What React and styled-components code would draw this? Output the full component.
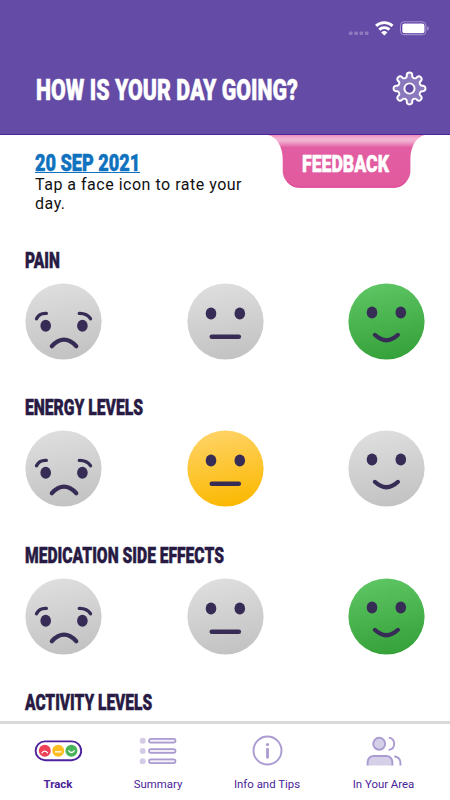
import React from "react";
import styled, { createGlobalStyle } from "styled-components";

const Global = createGlobalStyle`
  * { box-sizing: border-box; }
  body { margin: 0; background: #fff; font-family: Roboto, "Liberation Sans", sans-serif; }
`;

const Screen = styled.div`
  width: 450px;
  height: 800px;
  display: flex;
  flex-direction: column;
  overflow: hidden;
  background: #fff;
`;

const Header = styled.header`
  flex: none;
  height: 135px;
  background: #644ba5;
  border-bottom: 1px solid #4d2399;
`;

const StatusBar = styled.div`
  height: 48px;
  padding: 20px 20px 0 0;
  display: flex;
  justify-content: flex-end;
`;

const TitleRow = styled.div`
  height: 82px;
  display: flex;
  align-items: center;
  justify-content: space-between;
  padding: 0 22px 1px 35.5px;

  & > svg { flex: none; }
`;

const Condensed = styled.span`
  display: block;
  width: max-content;
  margin: 0;
  font-family: Roboto, sans-serif;
  font-weight: 900;
  font-size: ${(p) => p.$size}px;
  line-height: ${(p) => p.$size}px;
  color: ${(p) => p.$color || "#271a43"};
  -webkit-text-stroke: 0.5px ${(p) => p.$color || "#271a43"};
  white-space: nowrap;
  transform: scaleX(${(p) => p.$scale});
  transform-origin: 0 50%;
`;

const Title = styled(Condensed)`
  flex: none;
  margin: 5px -120px 0 0;
`;

const Intro = styled.section`
  flex: none;
  height: 111px;
  display: flex;
  padding-left: 35px;
`;

const IntroText = styled.div`
  width: 233px;
  padding-top: 15.5px;
`;

const DateLink = styled.a`
  display: block;
  width: 105px;
  height: 22.5px;
  border-bottom: 1.5px solid #0f72be;
`;

const Hint = styled.p`
  margin: 1.5px 0 0;
  width: 215px;
  font-size: 16px;
  line-height: 19.4px;
  letter-spacing: 0.51px;
  color: #111;
`;

const Feedback = styled.button`
  display: grid;
  width: 157px;
  height: 53px;
  padding: 0;
  border: 0;
  background: none;
  & > * { grid-area: 1 / 1; }
  & > span { justify-self: start; margin: 17px 0 0 34px; align-self: start; }
`;

const Questions = styled.main`
  flex: 1;
  min-height: 0;
  overflow: hidden;
`;

const Question = styled.section`
  height: 147.4px;
  padding: 4px 25px 0;
`;

const Heading = styled.h2`
  margin: 0;
  height: 33px;
`;

const Faces = styled.div`
  display: flex;
  justify-content: space-between;
`;

const FaceButton = styled.button`
  display: block;
  width: 77px;
  height: 77px;
  padding: 0;
  border: 0;
  background: none;
`;

const Nav = styled.nav`
  flex: none;
  height: 79px;
  border-top: 3px solid #d9d9d9;
  padding-left: 8px;
  display: grid;
  grid-template-columns: 100px 100px 118px 115px;
`;

const NavItem = styled.a`
  display: flex;
  flex-direction: column;
  align-items: center;
  font-size: 11.4px;
  line-height: 14px;
  font-weight: ${(p) => (p.$active ? 700 : 400)};
  color: #4a2498;
`;

const NavIcon = styled.div`
  height: 53px;
  display: flex;
  align-items: center;
`;

const FILLS = {
  grey: ["#dedede", "#c2c2c2"],
  amber: ["#ffd365", "#fbb800"],
  green: ["#5dc563", "#35a139"],
};

function Face({ mood, tone, id }) {
  const [top, bottom] = FILLS[tone];
  const line = { fill: "none", stroke: "#372c55", strokeLinecap: "round" };
  return (
    <FaceButton>
      <svg width="77" height="77" viewBox="0 0 77 77">
        <defs>
          <linearGradient id={id} x1="0.4" y1="0" x2="0.6" y2="1">
            <stop offset="0" stopColor={top} />
            <stop offset="1" stopColor={bottom} />
          </linearGradient>
        </defs>
        <circle cx="38.5" cy="38.5" r="38.1" fill={`url(#${id})`} />
        {mood === "sad" && (
          <g {...line}>
            <path d="M11.5 35.7Q14.5 29.9 21.3 30.4M54.3 30.4Q62 30.2 65.5 35.7" strokeWidth="3.4" />
            <path d="M26.8 63.2Q39 50.2 51.3 63.2" strokeWidth="4.2" />
            <ellipse cx="20.7" cy="42.8" rx="5.3" ry="6" fill="#372c55" stroke="none" />
            <ellipse cx="57.4" cy="42.8" rx="5.3" ry="6" fill="#372c55" stroke="none" />
          </g>
        )}
        {mood !== "sad" && (
          <g fill="#372c55">
            <ellipse cx="24" cy={mood === "ok" ? 30.4 : 29.4} rx="5.3" ry="6" />
            <ellipse cx="52.8" cy={mood === "ok" ? 30.4 : 29.4} rx="5.3" ry="6" />
          </g>
        )}
        {mood === "ok" && <path d="M24.8 53.7H51.8" {...line} strokeWidth="4.6" />}
        {mood === "happy" && <path d="M26.8 51.8Q38.4 62.7 50 51.8" {...line} strokeWidth="4.1" />}
      </svg>
    </FaceButton>
  );
}

function gearPath() {
  const point = (angle, side) => {
    const a = (angle * Math.PI) / 180;
    const x = 18 + 13.5 * Math.cos(a) - side * 2.8 * Math.sin(a);
    const y = 18 + 13.5 * Math.sin(a) + side * 2.8 * Math.cos(a);
    return `${x.toFixed(2)} ${y.toFixed(2)}`;
  };
  let d = `M${point(0, -1)}`;
  for (let i = 0; i < 8; i += 1) {
    d += `A2.82 2.82 0 0 1 ${point(i * 45, 1)}`;
    d += `A2.6 2.6 0 0 0 ${point((i + 1) * 45, -1)}`;
  }
  return `${d}Z`;
}

const Gear = () => (
  <svg width="37" height="37" viewBox="-0.5 -0.5 37 37" stroke="#fff" strokeWidth="1.9">
    <path d={gearPath()} fill="#8b78bd" />
    <circle cx="18" cy="18" r="5.1" fill="#644ba5" />
  </svg>
);

const StatusIcons = () => (
  <svg width="82" height="18" viewBox="348 20 82 18">
    <g fill="#fff" fillOpacity=".27">
      {[349, 354.3, 359.6, 364.9].map((x) => (
        <rect key={x} x={x} y="31.5" width="3.6" height="3.5" rx="1" />
      ))}
    </g>
    <g fill="none" stroke="#fff" strokeWidth="2.9">
      <path d="M376.1 25.9A12 12 0 0 1 392.5 25.9" />
      <path d="M379.2 29.6A7.5 7.5 0 0 1 389.4 29.6" />
    </g>
    <path d="M384.3 35.4L381.2 32.4Q384.3 29.8 387.4 32.4Z" fill="#fff" />
    <rect x="400.6" y="21.9" width="25.2" height="12.8" rx="3.4" fill="#5230a0" stroke="#ad9ed5" />
    <rect x="402.3" y="23.5" width="22.2" height="9.8" rx="2" fill="#fff" />
    <path d="M427.2 26.3Q428.9 26.9 428.9 28.4Q428.9 29.9 427.2 30.5Z" fill="#a395cc" />
  </svg>
);

const FeedbackShape = () => (
  <svg width="157" height="53" viewBox="0 0 157 53">
    <defs>
      <linearGradient id="tab" x1="0" y1="0" x2="0" y2="1">
        <stop offset="0" stopColor="#ef8dbe" />
        <stop offset=".07" stopColor="#f5b4d4" />
        <stop offset=".12" stopColor="#f1add0" />
        <stop offset=".24" stopColor="#e25da3" />
        <stop offset="1" stopColor="#e25a9e" />
      </linearGradient>
    </defs>
    <path d="M0 0C9 2 14.7 12 14.7 24V36A16.5 16.5 0 0 0 31 52.3H126A16.5 16.5 0 0 0 142.4 36V24C142.4 12 148 2 157 0Z" fill="url(#tab)" />
    <path d="M19 46Q23.5 52.3 31 52.3H126Q134 52.3 138 46" fill="none" stroke="#dc3c93" strokeWidth="1" />
  </svg>
);

const TrackIcon = () => (
  <svg width="48" height="22" viewBox="-0.6 0 48 22">
    <rect x="1" y="1.4" width="45.6" height="18.8" rx="9.4" fill="#fff" stroke="#4d229c" strokeWidth="1.9" />
    <circle cx="10.2" cy="10.8" r="6" fill="#ee4056" />
    <circle cx="23.6" cy="10.8" r="6" fill="#fdbd23" />
    <circle cx="36.8" cy="10.8" r="6" fill="#48b35a" />
    <g fill="none" stroke="#fff" strokeWidth="1.3" strokeLinecap="round">
      <path d="M7.4 12.8Q10.2 9.5 13 12.8M20.8 11.8H26.4M34.2 10.8Q36.8 14.2 39.6 10.8" />
    </g>
  </svg>
);

const SummaryIcon = () => (
  <svg width="38" height="28" viewBox="0 0 38 28">
    {[3.7, 14, 24.3].map((y) => (
      <g key={y}>
        <circle cx="3.7" cy={y} r="3" fill="#d4cbe7" />
        <rect x="10" y={y - 1.9} width="26.5" height="3.8" rx="1.9" fill="#f0edf7" stroke="#aa9bd1" strokeWidth="1.7" />
      </g>
    ))}
  </svg>
);

const InfoIcon = () => (
  <svg width="32" height="32" viewBox="-0.5 0.5 32 32">
    <circle cx="16" cy="16" r="14" fill="none" stroke="#aa9bd1" strokeWidth="1.9" />
    <circle cx="16" cy="10" r="1.6" fill="#aa9bd1" />
    <path d="M16 14.6V22.8" stroke="#aa9bd1" strokeWidth="2.8" strokeLinecap="round" />
  </svg>
);

const PeopleIcon = () => (
  <svg width="36" height="30" viewBox="0 0 36 30" stroke="#aa9bd1" strokeWidth="1.9" fill="none">
    <circle cx="13.2" cy="7.8" r="6" fill="#d6cfe8" />
    <path d="M1.6 29.6V26A6 6 0 0 1 7.6 20H20.4A6 6 0 0 1 26.4 26V29.6" fill="#d6cfe8" />
    <path d="M22.7 1.6Q28.2 2.5 28.2 7.8T22.7 14" />
    <path d="M28.3 20.2Q34 21.3 34.4 26V29.6" />
  </svg>
);

const QUESTIONS = [
  { label: "PAIN", scale: 0.72, picked: 2 },
  { label: "ENERGY LEVELS", scale: 0.73, picked: 1 },
  { label: "MEDICATION SIDE EFFECTS", scale: 0.727, picked: 2 },
  { label: "ACTIVITY LEVELS", scale: 0.721, picked: 0 },
];
const MOODS = ["sad", "ok", "happy"];
const TONES = ["grey", "amber", "green"];

const TABS = [
  { label: "Track", Icon: TrackIcon, active: true },
  { label: "Summary", Icon: SummaryIcon },
  { label: "Info and Tips", Icon: InfoIcon },
  { label: "In Your Area", Icon: PeopleIcon },
];

export default function App() {
  return (
    <Screen>
      <Global />
      <Header>
        <StatusBar>
          <StatusIcons />
        </StatusBar>
        <TitleRow>
          <Title as="h1" $size={29.5} $color="#fff" $scale={0.725}>
            HOW IS YOUR DAY GOING?
          </Title>
          <Gear />
        </TitleRow>
      </Header>
      <Intro>
        <IntroText>
          <DateLink>
            <Condensed $size={24} $color="#0f72be" $scale={0.755}>20 SEP 2021</Condensed>
          </DateLink>
          <Hint>Tap a face icon to rate your day.</Hint>
        </IntroText>
        <Feedback>
          <FeedbackShape />
          <Condensed $size={24.5} $color="#fff" $scale={0.721}>FEEDBACK</Condensed>
        </Feedback>
      </Intro>
      <Questions>
        {QUESTIONS.map((q, row) => (
          <Question key={q.label}>
            <Heading>
              <Condensed $size={21.5} $scale={q.scale}>{q.label}</Condensed>
            </Heading>
            <Faces>
              {MOODS.map((mood, i) => (
                <Face key={mood} id={`face-${row}-${i}`} mood={mood} tone={q.picked === i ? TONES[i] : "grey"} />
              ))}
            </Faces>
          </Question>
        ))}
      </Questions>
      <Nav>
        {TABS.map(({ label, Icon, active }) => (
          <NavItem key={label} $active={active}>
            <NavIcon>
              <Icon />
            </NavIcon>
            {label}
          </NavItem>
        ))}
      </Nav>
    </Screen>
  );
}
